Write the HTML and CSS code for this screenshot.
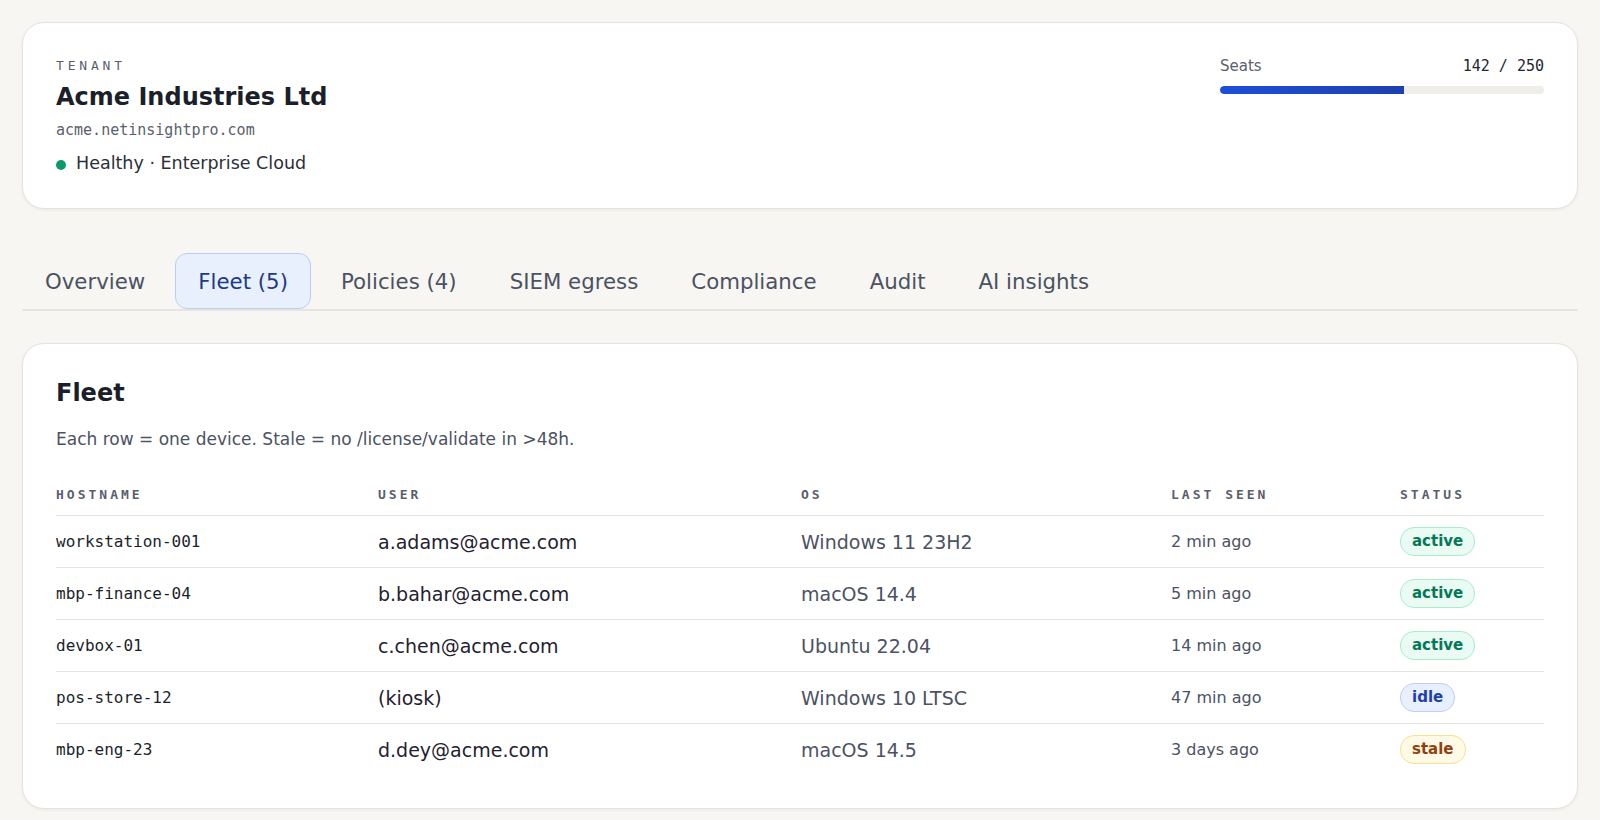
FILE: index.html
```html
<!DOCTYPE html>
<html>
<head>
    <meta charset="utf-8">
    <meta name="viewport" content="width=device-width, initial-scale=1">
    <title>Acme Industries Ltd · Fleet</title>
    <link rel="stylesheet" href="styles.css">
</head>
<body>
<main class="page">
    <section class="card tenant">
        <div class="tenant-info">
            <div class="eyebrow">TENANT</div>
            <h1>Acme Industries Ltd</h1>
            <div class="domain">acme.netinsightpro.com</div>
            <div class="health"><span class="dot"></span>Healthy · Enterprise Cloud</div>
        </div>
        <div class="seats">
            <div class="seats-head">
                <span class="seats-label">Seats</span>
                <span class="seats-count">142 / 250</span>
            </div>
            <div class="bar"><div class="bar-fill" style="width: 56.8%"></div></div>
        </div>
    </section>

    <nav class="tabs">
        <a class="tab">Overview</a>
        <a class="tab active">Fleet (5)</a>
        <a class="tab">Policies (4)</a>
        <a class="tab">SIEM egress</a>
        <a class="tab">Compliance</a>
        <a class="tab">Audit</a>
        <a class="tab">AI insights</a>
    </nav>

    <section class="card fleet">
        <h2>Fleet</h2>
        <p class="hint">Each row = one device. Stale = no /license/validate in &gt;48h.</p>
        <table>
            <thead>
                <tr>
                    <th class="col-host">HOSTNAME</th>
                    <th class="col-user">USER</th>
                    <th class="col-os">OS</th>
                    <th class="col-seen">LAST SEEN</th>
                    <th>STATUS</th>
                </tr>
            </thead>
            <tbody>
                <tr>
                    <td class="host">workstation-001</td>
                    <td class="user">a.adams@acme.com</td>
                    <td class="os">Windows 11 23H2</td>
                    <td class="seen">2 min ago</td>
                    <td><span class="badge active">active</span></td>
                </tr>
                <tr>
                    <td class="host">mbp-finance-04</td>
                    <td class="user">b.bahar@acme.com</td>
                    <td class="os">macOS 14.4</td>
                    <td class="seen">5 min ago</td>
                    <td><span class="badge active">active</span></td>
                </tr>
                <tr>
                    <td class="host">devbox-01</td>
                    <td class="user">c.chen@acme.com</td>
                    <td class="os">Ubuntu 22.04</td>
                    <td class="seen">14 min ago</td>
                    <td><span class="badge active">active</span></td>
                </tr>
                <tr>
                    <td class="host">pos-store-12</td>
                    <td class="user">(kiosk)</td>
                    <td class="os">Windows 10 LTSC</td>
                    <td class="seen">47 min ago</td>
                    <td><span class="badge idle">idle</span></td>
                </tr>
                <tr>
                    <td class="host">mbp-eng-23</td>
                    <td class="user">d.dey@acme.com</td>
                    <td class="os">macOS 14.5</td>
                    <td class="seen">3 days ago</td>
                    <td><span class="badge stale">stale</span></td>
                </tr>
            </tbody>
        </table>
    </section>
</main>
</body>
</html>
```

FILE: styles.css
```css
:root {
    --page-bg: #f7f6f2;
    --card-bg: #ffffff;
    --border-color: #e6e3da;
    --text-color: #1b1f2a;
    --muted-color: #4b5263;
    --label-color: #5a5f6e;
    --mono: "DejaVu Sans Mono", "Liberation Mono", monospace;
}

html, body {
    margin: 0;
    padding: 0;
}

body {
    background-color: var(--page-bg);
    color: var(--text-color);
    font-family: "DejaVu Sans", Verdana, sans-serif;
}

.page {
    padding: 22px;
}

.card {
    background-color: var(--card-bg);
    border: 1px solid var(--border-color);
    border-radius: 22px;
    box-shadow: 0 1px 3px rgba(40, 36, 20, 0.06);
}

/* tenant header */

.tenant {
    display: flex;
    justify-content: space-between;
    align-items: flex-start;
    padding: 33px;
}

.eyebrow {
    color: var(--label-color);
    font-family: var(--mono);
    font-size: 13px;
    letter-spacing: 3.8px;
    line-height: 20px;
}

h1 {
    font-size: 24px;
    font-weight: bold;
    line-height: 30px;
    margin: 6px 0 0;
}

.domain {
    color: var(--label-color);
    font-family: var(--mono);
    font-size: 15px;
    line-height: 20px;
    margin-top: 8px;
}

.health {
    align-items: center;
    color: #2a2f3a;
    display: flex;
    font-size: 17.5px;
    gap: 10px;
    line-height: 24px;
    margin-top: 11px;
}

.dot {
    background-color: #0b9a68;
    border-radius: 50%;
    display: inline-block;
    height: 10px;
    margin-top: 3px;
    width: 10px;
}

.seats {
    width: 324px;
}

.seats-head {
    align-items: baseline;
    display: flex;
    justify-content: space-between;
    line-height: 20px;
}

.seats-label {
    color: var(--label-color);
    font-size: 15px;
}

.seats-count {
    color: #23262f;
    font-family: var(--mono);
    font-size: 15px;
}

.bar {
    background-color: #efeee8;
    border-radius: 4px;
    height: 8px;
    margin-top: 10px;
    overflow: hidden;
}

.bar-fill {
    background: linear-gradient(90deg, #1d4fd6, #1e40af);
    border-radius: 4px 0 0 4px;
    height: 100%;
}

/* tabs */

.tabs {
    border-bottom: 2px solid #e6e4de;
    display: flex;
    gap: 7px;
    margin-top: 44px;
}

.tab {
    align-items: center;
    border: 1px solid transparent;
    border-radius: 12px;
    color: var(--muted-color);
    display: flex;
    font-size: 21.3px;
    height: 54px;
    padding: 0 22px;
}

.tab.active {
    background-color: #e8f0fd;
    border-color: #b9cdf3;
    color: #1e3a8a;
}

/* fleet table */

.fleet {
    margin-top: 32px;
    padding: 34px 33px 33px;
}

h2 {
    font-size: 24px;
    font-weight: bold;
    line-height: 30px;
    margin: 0;
}

.hint {
    color: var(--muted-color);
    font-size: 17px;
    line-height: 24px;
    margin: 19px 0 0;
}

table {
    border-collapse: collapse;
    margin-top: 36px;
    width: 100%;
}

th {
    border-bottom: 1px solid var(--border-color);
    color: var(--label-color);
    font-family: var(--mono);
    font-size: 13px;
    font-weight: bold;
    letter-spacing: 3px;
    line-height: 16px;
    padding: 0 0 12px;
    text-align: left;
}

.col-host { width: 322px; }
.col-user { width: 423px; }
.col-os   { width: 370px; }
.col-seen { width: 229px; }

td {
    border-bottom: 1px solid var(--border-color);
    height: 29px;
    padding: 11px 0;
    vertical-align: middle;
}

tbody tr:last-child td {
    border-bottom: none;
}

.host {
    font-family: var(--mono);
    font-size: 16px;
}

.user {
    color: #1f2230;
    font-size: 19px;
}

.os {
    color: var(--muted-color);
    font-size: 19px;
}

.seen {
    color: var(--muted-color);
    font-size: 16px;
}

.badge {
    border: 1px solid;
    border-radius: 14px;
    display: inline-block;
    font-size: 15px;
    font-weight: bold;
    line-height: 19px;
    padding: 4px 11px;
}

.badge.active {
    background-color: #e9fbf3;
    border-color: #a7ecd0;
    color: #047857;
}

.badge.idle {
    background-color: #e8f0fd;
    border-color: #bcd0f5;
    color: #1e40af;
}

.badge.stale {
    background-color: #fffae6;
    border-color: #f9e08e;
    color: #92400e;
}
```
